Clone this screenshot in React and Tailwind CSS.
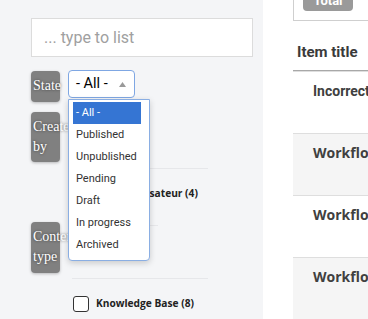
import React from 'react';

const STATES = ['- All -', 'Published', 'Unpublished', 'Pending', 'Draft', 'In progress', 'Archived'];

const Label = ({ children, className = '' }) => (
  <div
    className={`w-[29px] shrink-0 rounded-[4px] bg-[#808080] pl-[2px] py-[5px] text-[14px] leading-[20px] text-white shadow-[0_1px_3px_rgba(0,0,0,0.25)] [text-shadow:0_0_3px_rgba(0,0,0,0.6)] ${className}`}
    style={{ fontFamily: '"Liberation Serif", serif' }}
  >
    {children}
  </div>
);

const CheckRow = ({ label }) => (
  <div className="flex h-[50px] items-center gap-[7px] pl-[1px]">
    <span className="h-[16px] w-[16px] shrink-0 rounded-[3px] border-[1.5px] border-[#333] bg-white" />
    <span className="whitespace-nowrap text-[10.2px] font-bold text-[#222]" style={{ fontFamily: '"Open Sans", sans-serif' }}>
      {label}
    </span>
  </div>
);

const StateSelect = () => (
  <div className="relative">
    <div className="flex h-[28px] w-[67px] items-center justify-between rounded-[4px] border border-[#7fa7e3] bg-white pl-[7px] pr-[8px]">
      <span className="text-[14.5px] text-black" style={{ fontFamily: 'Roboto, sans-serif' }}>- All -</span>
      <svg width="7" height="5" viewBox="0 0 7 5">
        <path d="M3.5 0 L7 5 L0 5 Z" fill="#9a9a9a" />
      </svg>
    </div>
    <div className="absolute left-0 top-[29px] z-10 w-[82px] rounded-b-[4px] border border-[#8aaee3] bg-white pb-[4px] pl-[4px] pr-[8px] pt-[2px] shadow-[0_2px_6px_rgba(0,0,0,0.18)]">
      {STATES.map((s, i) => (
        <div
          key={s}
          className={`h-[22px] pl-[3px] text-[11px] leading-[22px] ${i === 0 ? 'bg-[#3575d3] text-white' : 'text-[#333]'}`}
          style={{ fontFamily: 'Roboto, sans-serif' }}
        >
          {s}
        </div>
      ))}
    </div>
  </div>
);

const Row = ({ title, shaded, font }) => (
  <div className={`h-[62px] border-t border-[#dedede] pl-[20px] pt-[6px] ${shaded ? 'bg-[#f5f5f5]' : 'bg-white'}`}>
    <span className="whitespace-nowrap text-[14px] font-bold leading-[20px] text-[#404040]" style={{ fontFamily: font }}>
      {title}
    </span>
  </div>
);

export default function App() {
  return (
    <div className="flex h-[319px] w-full overflow-hidden bg-white">
      {/* Filters */}
      <div className="w-[263px] shrink-0 bg-[#f4f5f7] pl-[31px] pr-[10px] pt-[18px]">
        <div
          className="flex h-[39px] items-center border border-[#dcdcdc] bg-white pl-[12px] text-[16px] text-[#a0a0a0]"
          style={{ fontFamily: 'Roboto, sans-serif' }}
        >
          ... type to list
        </div>

        <div className="mt-[13px] flex gap-[8px]">
          <Label className="mt-[1px] h-[31px]">State</Label>
          <StateSelect />
        </div>

        <div className="mt-[10px] flex gap-[12px]">
          <Label className="h-[50px]">Created by</Label>
          <div className="w-[136px] pt-[56px]">
            <div className="border-t border-[#e6e7ea]" />
            <CheckRow label="Super Utilisateur (4)" />
          </div>
        </div>

        <div className="mt-[3px] flex gap-[12px]">
          <Label className="h-[51px]">Content type</Label>
          <div className="w-[136px] pt-[3px]">
            <div className="w-[86px] border-t border-[#e6e7ea]" />
            <div className="h-[52px]" />
            <div className="border-t border-[#e6e7ea]" />
            <CheckRow label="Knowledge Base (8)" />
          </div>
        </div>
      </div>

      {/* List */}
      <div className="w-[300px] shrink-0 pl-[30px]">
        <div className="h-[31px] border-x border-b border-[#cfcfcf] pl-[9px]">
          <div
            className="-mt-[10px] flex h-[21px] w-[50px] items-center justify-center rounded-[4px] bg-[#9a9a9a] text-[13px] font-bold text-white"
            style={{ fontFamily: 'Roboto, sans-serif' }}
          >
            Total
          </div>
        </div>
        <div
          className="mt-[21px] border-b border-[#a8a8a8] pb-[8px] pl-[4px] text-[15px] font-bold leading-[20px] text-[#3a3a3a]"
          style={{ fontFamily: 'Roboto, sans-serif' }}
        >
          Item title
        </div>
        <Row title="Incorrect workflow" font="Roboto, sans-serif" />
        <Row title="Workflow" shaded font='"Open Sans", sans-serif' />
        <Row title="Workflow" font='"Open Sans", sans-serif' />
        <Row title="Workflow" shaded font='"Open Sans", sans-serif' />
      </div>
    </div>
  );
}
